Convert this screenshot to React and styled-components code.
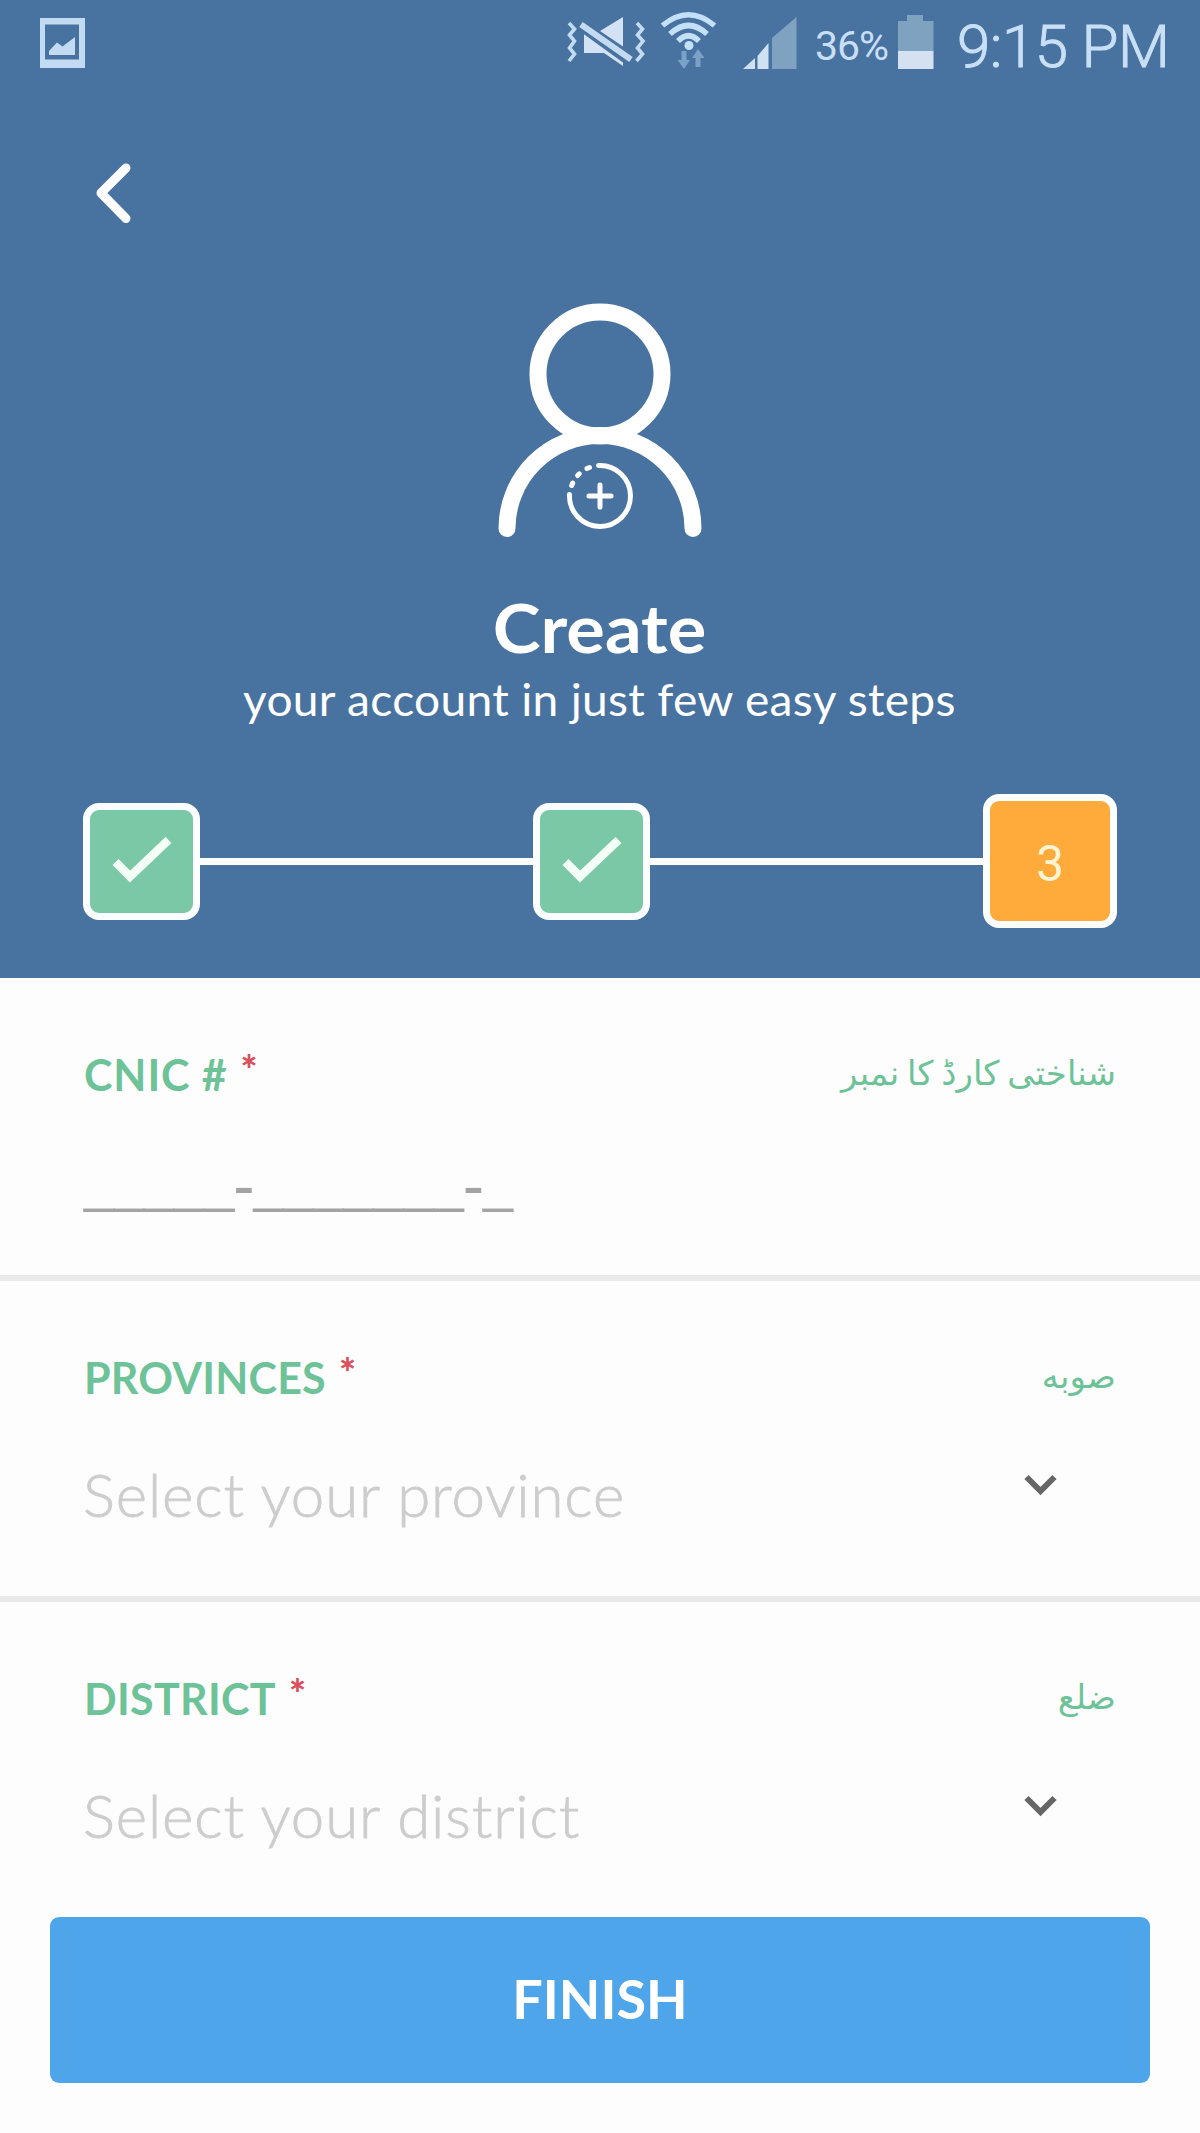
import styled, { createGlobalStyle } from "styled-components";

const fields = [
  { id: "cnic", label: "CNIC #", urdu: "شناختی کارڈ کا نمبر", spacing: 0.9 },
  {
    id: "province",
    label: "PROVINCES",
    urdu: "صوبه",
    spacing: 0.2,
    placeholder: "Select your province",
  },
  {
    id: "district",
    label: "DISTRICT",
    urdu: "ضلع",
    spacing: 0.3,
    placeholder: "Select your district",
  },
];

export default function App() {
  return (
    <>
      <GlobalStyle />
      <Page>
        <Header>
          <StatusBar />
          <BackButton aria-label="Back">
            <svg width="36" height="60" viewBox="96 163 36 60">
              <path d="M126 168L101 193L126 218.5" />
            </svg>
          </BackButton>
          <PersonIcon />
          <Title>Create</Title>
          <Subtitle>your account in just few easy steps</Subtitle>
          <Stepper>
            <Step>
              <Check />
            </Step>
            <StepLine />
            <Step>
              <Check />
            </Step>
            <StepLine />
            <Step $active>3</Step>
          </Stepper>
        </Header>
        <Form>
          {fields.map((field) => (
            <Field key={field.id}>
              <LabelRow>
                <Label $spacing={field.spacing}>
                  {field.label}
                  <Required>*</Required>
                </Label>
                <UrduLabel lang="ur" dir="rtl">
                  {field.urdu}
                </UrduLabel>
              </LabelRow>
              {field.placeholder ? (
                <Select>
                  <Placeholder>{field.placeholder}</Placeholder>
                  <Chevron />
                </Select>
              ) : (
                <CnicMask>
                  _____<Dash>-</Dash>_______<Dash>-</Dash>_
                </CnicMask>
              )}
            </Field>
          ))}
        </Form>
        <Footer>
          <FinishButton>FINISH</FinishButton>
        </Footer>
      </Page>
    </>
  );
}

function StatusBar() {
  return (
    <StatusBarContainer>
      {/* screenshot saved */}
      <svg width="46" height="88" viewBox="40 0 46 88">
        <path
          d="M40 18H85V68H40ZM45 24.5V59.5H79V24.5Z"
          fill="#c3daf3"
          fillRule="evenodd"
        />
        <path d="M49 55V51L57 42.5L62.5 46.5L75 37V55Z" fill="#c3daf3" />
      </svg>
      <StatusIcons>
        {/* muted with vibration */}
        <svg width="80" height="88" viewBox="566 0 80 88">
          <path d="M600 31L623 17V46.5Z" fill="#d3e2f4" />
          <path d="M584 34H592L623 60V66L604 53H584Z" fill="#d3e2f4" />
          <path d="M580 29L629 64.5" stroke="#4873a0" strokeWidth="4" />
          <path d="M581 24.5L631 59.5" stroke="#c3daf3" strokeWidth="6" />
          <path
            d="M569 23L574.5 29L569.5 35L574.5 41L569.5 48L574.5 54L569 61M637 23L642.5 29L637.5 35L643 41L637.5 48L642.5 54L636.5 61"
            stroke="#c3daf3"
            strokeWidth="3.6"
            fill="none"
          />
        </svg>
        {/* wifi with traffic arrows */}
        <svg width="82" height="88" viewBox="646 0 82 88">
          <g fill="none" stroke="#c3e0f8" strokeWidth="5.5">
            <path d="M662.5 25.5Q688.5 4 714.5 25.5" />
            <path d="M670 34Q688.5 17 707 34" />
            <path d="M678 41Q688.5 30.5 699 41" />
          </g>
          <circle cx="689" cy="45.5" r="4.5" fill="#c3e0f8" />
          <path
            d="M681.5 51H686.5V60H690L684 69L677.5 60H681.5ZM695.5 67V58H692L698 49L704.5 58H700.5V67Z"
            fill="#7ba1c8"
          />
        </svg>
        {/* signal strength */}
        <svg width="87" height="88" viewBox="728 0 87 88">
          <path d="M743 69L755 58V69ZM757.5 69V56L768.5 43V69Z" fill="#d0e1f4" />
          <path d="M772 69V38L796.5 17V69Z" fill="#7fa2c0" />
        </svg>
        <BatteryText>36%</BatteryText>
        <svg width="38" height="88" viewBox="897 0 38 88">
          <path d="M898 52V21H907V15H923V21H933.5V52Z" fill="#7fa2c0" />
          <path d="M898 51H933.5V69H898Z" fill="#d5e1f1" />
        </svg>
        <Clock>9:15 PM</Clock>
      </StatusIcons>
    </StatusBarContainer>
  );
}

function PersonIcon() {
  return (
    <PersonSvg width="206" height="236" viewBox="497 302 206 236">
      <g strokeWidth="17">
        <circle cx="600" cy="373" r="62" />
        <path d="M507 527.5A93 93 0 0 1 693 527.5" />
      </g>
      {/* plus badge, dashed in its upper left quarter */}
      <g strokeWidth="5">
        <path d="M598.5 464.5A30.5 30.5 0 1 1 569.5 493.5" />
        <path d="M600 484V506M589 495H611" />
        <path d="M571.7 484.5L572.7 482" />
        <path d="M577.6 474.5L579.3 472.8" />
        <path d="M587 467.5L589.5 466.5" />
      </g>
    </PersonSvg>
  );
}

function Check() {
  return (
    <svg width="60" height="48" viewBox="112 838 60 48">
      <path
        d="M115.5 863L130 877.5L168.5 841"
        fill="none"
        stroke="#f4fff8"
        strokeWidth="8.5"
      />
    </svg>
  );
}

function Chevron() {
  return (
    <ChevronSvg width="33" height="22" viewBox="0 0 33 22">
      <path d="M2.5 3L16.5 17L30.5 3" />
    </ChevronSvg>
  );
}

const GlobalStyle = createGlobalStyle`
  * {
    box-sizing: border-box;
  }
  body {
    margin: 0;
    background: #fdfdfd;
  }
  svg {
    display: block;
    flex-shrink: 0;
  }
`;

const Page = styled.div`
  width: 1200px;
  height: 2133px;
  overflow: hidden;
  background: #fdfdfd;
  font-family: Lato, sans-serif;
`;

const Header = styled.header`
  display: flex;
  flex-direction: column;
  align-items: center;
  height: 978px;
  background: #4873a0;
  color: #fff;
`;

const StatusBarContainer = styled.div`
  display: flex;
  justify-content: space-between;
  width: 100%;
  height: 88px;
  padding-left: 40px;
  font-family: Roboto, sans-serif;
  color: #c9dff6;
`;

const StatusIcons = styled.div`
  display: flex;
  width: 634px;
`;

const BatteryText = styled.span`
  width: 82px;
  padding-top: 1px;
  font-size: 41px;
  line-height: 90px;
  letter-spacing: -1px;
`;

const Clock = styled.span`
  padding: 3px 0 0 22px;
  font-size: 60px;
  font-weight: 300;
  line-height: 88px;
  letter-spacing: -0.5px;
  white-space: nowrap;
  -webkit-text-stroke: 1px #c9dff6;
`;

const BackButton = styled.button`
  align-self: flex-start;
  margin: 75px 0 0 96px;
  padding: 0;
  border: none;
  background: none;

  path {
    fill: none;
    stroke: #fff;
    stroke-width: 9px;
    stroke-linecap: round;
    stroke-linejoin: round;
  }
`;

const PersonSvg = styled.svg`
  margin-top: 80px;
  fill: none;
  stroke: #fff;
  stroke-linecap: round;
`;

const Title = styled.h1`
  margin: 54px 0 0;
  font-size: 66px;
  font-weight: 700;
  line-height: 70px;
  transform: scaleX(1.095);
`;

const Subtitle = styled.p`
  margin: 10px 2px 0 0;
  font-size: 44px;
  line-height: 52px;
  letter-spacing: 0.3px;
  white-space: nowrap;
  transform: scaleX(1.047);
`;

const Stepper = styled.div`
  display: flex;
  align-items: center;
  width: 100%;
  margin-top: 69px;
  padding: 0 83px;
`;

const Step = styled.div`
  display: flex;
  align-items: center;
  justify-content: center;
  width: ${({ $active }) => ($active ? "134px" : "117px")};
  height: ${({ $active }) => ($active ? "134px" : "117px")};
  padding-top: ${({ $active }) => ($active ? "6px" : "0")};
  border: 7px solid #fbfdff;
  border-radius: 16px;
  background: ${({ $active }) => ($active ? "#ffab3b" : "#7bc8a6")};
  color: #fff3d2;
  font-family: Roboto, sans-serif;
  font-size: 50px;
`;

const StepLine = styled.div`
  flex: 1;
  height: 7px;
  background: #fbfdff;
`;

const Form = styled.form`
  display: flex;
  flex-direction: column;
`;

const Field = styled.div`
  height: 321px;
  padding: 67px 84px 0;
  border-bottom: 6px solid #e9e9e9;

  &:first-child {
    height: 303px;
  }

  &:last-child {
    height: 315px;
    border-bottom: none;
  }
`;

const LabelRow = styled.div`
  display: flex;
  justify-content: space-between;
  height: 60px;
`;

const Label = styled.label`
  display: flex;
  color: #6dc397;
  font-size: 43px;
  font-weight: 700;
  line-height: 60px;
  letter-spacing: ${({ $spacing }) => $spacing}px;
`;

const Required = styled.span`
  margin-left: 13px;
  color: #d9505f;
  font-size: 40px;
  font-weight: 900;
  line-height: 50px;
`;

const UrduLabel = styled.span`
  color: #6dc397;
  font-family: "DejaVu Sans", sans-serif;
  font-size: 34px;
  line-height: 56px;
  word-spacing: -3px;
`;

const Select = styled.div`
  display: flex;
  align-items: center;
  justify-content: space-between;
  height: 80px;
  margin-top: 46px;
`;

const Placeholder = styled.span`
  margin-left: -1px;
  color: #cdcdcd;
  font-size: 60px;
  font-weight: 300;
  line-height: 80px;
  letter-spacing: 0.9px;
  -webkit-text-stroke: 0.8px #cdcdcd;
`;

const ChevronSvg = styled.svg`
  margin: 0 59px 19px 0;
  fill: none;
  stroke: #666;
  stroke-width: 6px;
`;

const CnicMask = styled.div`
  margin-top: 37px;
  color: #a3a3a3;
  font-family: "Liberation Sans", sans-serif;
  font-size: 54px;
  line-height: 80px;
`;

const Dash = styled.span`
  margin-left: -1px;
  font-size: 64px;
  line-height: 1px;
  letter-spacing: -1px;
  vertical-align: -7px;
`;

const Footer = styled.footer`
  padding: 0 50px;
`;

const FinishButton = styled.button`
  display: block;
  width: 100%;
  height: 166px;
  padding: 0 0 3px;
  border: none;
  border-radius: 9px;
  background: #4fa5ea;
  color: #fff;
  font-family: Lato, sans-serif;
  font-size: 54px;
  font-weight: 700;
`;
